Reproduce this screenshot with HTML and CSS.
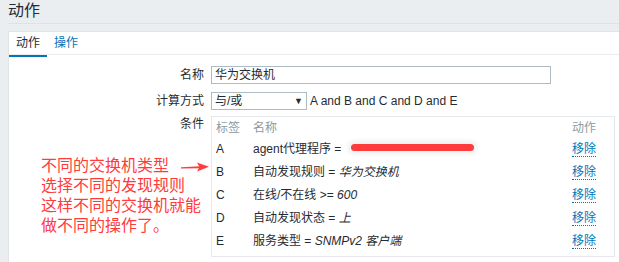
FILE: index.html
```html
<!DOCTYPE html>
<html lang="zh-CN">
<head>
  <meta charset="UTF-8" />
  <title>动作</title>
  <link rel="stylesheet" href="styles.css">
</head>
<body>
  <div class="header">
    <h1>动作</h1>
  </div>

  <div class="panel">
    <div class="tabs">
      <span class="tab active">动作</span>
      <span class="tab">操作</span>
    </div>

    <div class="form">
      <div class="form-row">
        <label class="form-label">名称</label>
        <div class="form-field">
          <div class="text-input">华为交换机</div>
        </div>
      </div>

      <div class="form-row row-calc">
        <label class="form-label">计算方式</label>
        <div class="form-field">
          <div class="select"><span>与/或</span><span class="select-arrow">▼</span></div>
          <span class="formula">A and B and C and D and E</span>
        </div>
      </div>

      <div class="form-row">
        <div class="form-label label-cond">
          <span>条件</span>
          <div class="note">
            <div class="note-line">不同的交换机类型
              <svg class="arrow" width="28" height="10" viewBox="0 0 28 10">
                <path d="M0 5.2 L19 4.2 L19 6.2 L0 6.4 Z" fill="#ff3b3b" />
                <path d="M16 0.5 L28 4.8 L16 9.5 L18.5 5 Z" fill="#ff3b3b" />
              </svg>
            </div>
            <div class="note-line">选择不同的发现规则</div>
            <div class="note-line">这样不同的交换机就能</div>
            <div class="note-line">做不同的操作了。</div>
          </div>
        </div>
        <div class="form-field">
          <div class="cond-table">
            <div class="cond-row cond-head">
              <span class="col-label">标签</span>
              <span class="col-name">名称</span>
              <span class="col-action">动作</span>
            </div>
            <div class="cond-row">
              <span class="col-label">A</span>
              <span class="col-name">agent代理程序 = <span class="scribble"></span></span>
              <span class="col-action"><a class="link">移除</a></span>
            </div>
            <div class="cond-row">
              <span class="col-label">B</span>
              <span class="col-name">自动发现规则 = <i>华为交换机</i></span>
              <span class="col-action"><a class="link">移除</a></span>
            </div>
            <div class="cond-row">
              <span class="col-label">C</span>
              <span class="col-name">在线/不在线 &gt;= <i>600</i></span>
              <span class="col-action"><a class="link">移除</a></span>
            </div>
            <div class="cond-row">
              <span class="col-label">D</span>
              <span class="col-name">自动发现状态 = <i>上</i></span>
              <span class="col-action"><a class="link">移除</a></span>
            </div>
            <div class="cond-row">
              <span class="col-label">E</span>
              <span class="col-name">服务类型 = <i>SNMPv2 客户端</i></span>
              <span class="col-action"><a class="link">移除</a></span>
            </div>
          </div>
        </div>
      </div>
    </div>
  </div>
</body>
</html>
```

FILE: styles.css
```css
body { margin: 0; background: #ebeef0; color: #1f2c33; font-family: "Liberation Sans", "Noto Sans CJK SC", sans-serif; font-size: 12px; height: 100vh; overflow: hidden; }

.header { margin-left: 8px; height: 23px; border-bottom: 1px solid #dde2e5; }
.header h1 { margin: 0; font-size: 16px; font-weight: normal; line-height: 22px; }

.panel { margin: 7px 0 0 8px; background: #fff; border-top: 1px solid #dfe4e7; border-left: 1px solid #dfe4e7; height: calc(100vh - 32px); }

.tabs { display: flex; border-bottom: 1px solid #ebeef0; }
.tab { padding: 0 7px 0 7px; line-height: 22px; color: #0275b8; }
.tab.active { color: #1f2c33; padding-bottom: 1px; border-bottom: 2px solid #0275b8; margin-bottom: -3px; }

.form { padding-top: 11px; }
.form-row { display: flex; gap: 7px; margin-bottom: 8px; }
.row-calc { margin-bottom: 6px; }
.form-label { width: 195px; text-align: right; line-height: 18px; flex-shrink: 0; }
.label-cond { line-height: 16px; }
.form-field { display: flex; align-items: center; }

.text-input { box-sizing: border-box; width: 340px; height: 18px; border: 1px solid #acbbc4; padding: 0 3px; line-height: 16px; }

.select { box-sizing: border-box; width: 96px; height: 18px; border: 1px solid #acbbc4; padding: 0 3px; line-height: 16px; display: flex; justify-content: space-between; }
.select-arrow { font-size: 9px; }
.formula { margin-left: 3px; }

.note { text-align: left; padding-left: 32px; margin-top: 24px; color: #ff3b3b; font-size: 16px; line-height: 20px; }
.note-line { white-space: nowrap; }
.arrow { margin-left: 8px; vertical-align: -1px; }

.cond-table { box-sizing: border-box; width: 404px; border: 1px solid #e6e9eb; padding: 1px 0 3px 4px; align-self: flex-start; }
.cond-row { display: flex; height: 23px; line-height: 23px; }
.cond-head { height: 20px; line-height: 20px; color: #8b9aa3; }
.col-label { width: 37px; }
.col-name { flex: 1; white-space: nowrap; }
.col-action { width: 42px; }

.scribble { display: inline-block; width: 123px; height: 7px; background: #ff3b3b; border-radius: 4px; vertical-align: 2px; margin-left: 6px; box-shadow: 0 0 4px 4px #f3f3f3; }

.link { color: #0275b8; border-bottom: 1px dotted #0275b8; line-height: 14px; }
```
